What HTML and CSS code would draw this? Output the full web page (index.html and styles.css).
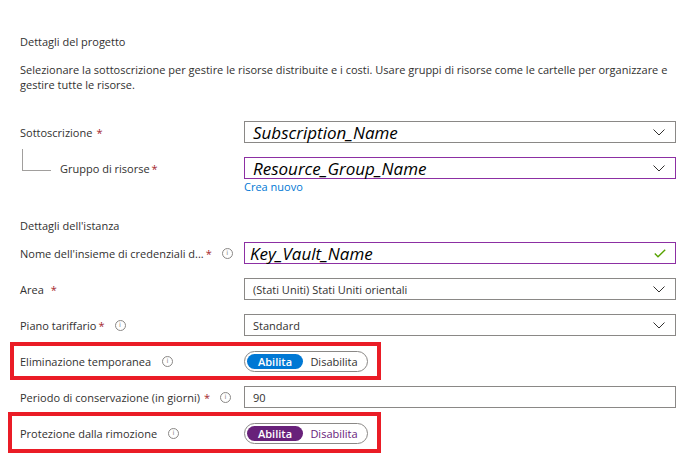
FILE: index.html
```html
<!DOCTYPE html>
<html lang="it">
<head>
<meta charset="utf-8">
<title>Dettagli del progetto</title>
<link rel="stylesheet" href="styles.css">
</head>
<body>
<div class="page">
  <div class="section-title">Dettagli del progetto</div>
  <p class="desc">Selezionare la sottoscrizione per gestire le risorse distribuite e i costi. Usare gruppi di risorse come le cartelle per organizzare e gestire tutte le risorse.</p>

  <div class="row first">
    <div class="label">Sottoscrizione<span class="req">*</span></div>
    <div class="field">
      <span class="value big">Subscription_Name</span>
      <svg class="chev" width="12" height="7" viewBox="0 0 12 7"><path d="M0.5 0.5 L6 6 L11.5 0.5" fill="none" stroke="#323130" stroke-width="1"/></svg>
    </div>
  </div>

  <div class="row">
    <div class="label child">Gruppo di risorse<span class="req tight">*</span></div>
    <div class="field focus">
      <span class="value big">Resource_Group_Name</span>
      <svg class="chev" width="12" height="7" viewBox="0 0 12 7"><path d="M0.5 0.5 L6 6 L11.5 0.5" fill="none" stroke="#323130" stroke-width="1"/></svg>
    </div>
  </div>
  <div class="helper-row"><a class="link">Crea nuovo</a></div>

  <div class="section-title second">Dettagli dell'istanza</div>

  <div class="row">
    <div class="label">Nome dell'insieme di credenziali d...<span class="req tight">*</span><span class="info">i</span></div>
    <div class="field focus">
      <span class="value big kv">Key_Vault_Name</span>
      <svg class="check" width="12" height="9" viewBox="0 0 12 9"><path d="M0.8 4.6 L4 7.8 L11.2 0.8" fill="none" stroke="#57a300" stroke-width="1.4"/></svg>
    </div>
  </div>

  <div class="row">
    <div class="label">Area<span class="req wide">*</span></div>
    <div class="field">
      <span class="value">(Stati Uniti) Stati Uniti orientali</span>
      <svg class="chev" width="12" height="7" viewBox="0 0 12 7"><path d="M0.5 0.5 L6 6 L11.5 0.5" fill="none" stroke="#323130" stroke-width="1"/></svg>
    </div>
  </div>

  <div class="row">
    <div class="label">Piano tariffario<span class="req tight">*</span><span class="info">i</span></div>
    <div class="field">
      <span class="value">Standard</span>
      <svg class="chev" width="12" height="7" viewBox="0 0 12 7"><path d="M0.5 0.5 L6 6 L11.5 0.5" fill="none" stroke="#323130" stroke-width="1"/></svg>
    </div>
  </div>

  <div class="row">
    <div class="label">Eliminazione temporanea<span class="info gap">i</span></div>
    <div class="toggle">
      <span class="opt on blue">Abilita</span>
      <span class="opt">Disabilita</span>
    </div>
  </div>

  <div class="row">
    <div class="label">Periodo di conservazione (in giorni)<span class="req">*</span><span class="info">i</span></div>
    <div class="field">
      <span class="value">90</span>
    </div>
  </div>

  <div class="row">
    <div class="label">Protezione dalla rimozione<span class="info gap">i</span></div>
    <div class="toggle">
      <span class="opt on purple">Abilita</span>
      <span class="opt purple-text">Disabilita</span>
    </div>
  </div>

  <div class="annot annot-1"></div>
  <div class="annot annot-2"></div>
</div>
</body>
</html>
```

FILE: styles.css
```css
* { box-sizing: border-box; }
html, body { margin: 0; padding: 0; background: #ffffff; }
body {
  font-family: "Open Sans", "Noto Sans", sans-serif;
  font-size: 11px;
  color: #323130;
}
.page {
  position: relative;
  width: 695px;
  height: 471px;
  padding: 34px 0 0 20px;
  overflow: hidden;
}
.section-title {
  font-size: 11px;
  line-height: 16px;
  height: 16px;
}
.section-title.second { margin-top: 23px; margin-bottom: 8px; }
.desc {
  margin: 12px 0 0 0;
  width: 660px;
  line-height: 15px;
  font-size: 11px;
}
.row {
  display: flex;
  align-items: center;
  height: 22px;
  margin-bottom: 14px;
}
.row.first { margin-top: 29px; }
.label {
  position: relative;
  width: 224px;
  flex: none;
  display: flex;
  align-items: center;
  white-space: nowrap;
}
.label.child { padding-left: 40px; }
.label.child::before {
  content: "";
  position: absolute;
  left: 2px;
  top: -12px;
  width: 28px;
  height: 21px;
  border-left: 1px solid #a19f9d;
  border-bottom: 1px solid #a19f9d;
}
.req { color: #a4262c; margin-left: 4px; }
.req.tight { margin-left: 2px; }
.req.wide { margin-left: 7px; }
.info {
  display: inline-flex;
  align-items: center;
  justify-content: center;
  width: 11px;
  height: 11px;
  border: 1px solid #8a8886;
  border-radius: 50%;
  font-size: 7px;
  line-height: 1;
  color: #8a8886;
  margin-left: 10px;
  font-family: "DejaVu Sans", sans-serif;
}
.info.gap { margin-left: 11px; }
.field {
  position: relative;
  width: 432px;
  height: 22px;
  border: 1px solid #8a8886;
  display: flex;
  align-items: center;
  padding: 0 8px;
}
.field.focus { border-color: #8c2fa3; }
.value { flex: 1; white-space: nowrap; }
.value.big {
  font-style: italic;
  font-size: 17px;
  color: #000;
}
.value.kv { margin-left: -3px; }
.chev { flex: none; margin-right: 2px; }
.check { flex: none; margin-right: 1px; }
.link { color: #0078d4; }
.helper-row {
  margin-left: 224px;
  margin-top: -14px;
  height: 16px;
  line-height: 16px;
}
.toggle {
  display: flex;
  align-items: center;
  width: 124px;
  height: 21px;
  border: 1px solid #8a8886;
  border-radius: 11px;
  padding: 0 2px;
}
.opt {
  flex: 1;
  text-align: center;
  height: 15px;
  line-height: 15px;
  border-radius: 8px;
}
.opt.on { flex: none; width: 56px; color: #fff; font-weight: 600; }
.opt.blue { background: #0078d4; }
.opt.purple { background: #68217a; }
.purple-text { color: #68217a; }
.annot {
  position: absolute;
  border: 4px solid #ea1c26;
}
.annot-1 { left: 10px; top: 342px; width: 371px; height: 38px; }
.annot-2 { left: 8px; top: 412px; width: 373px; height: 41px; }
```
